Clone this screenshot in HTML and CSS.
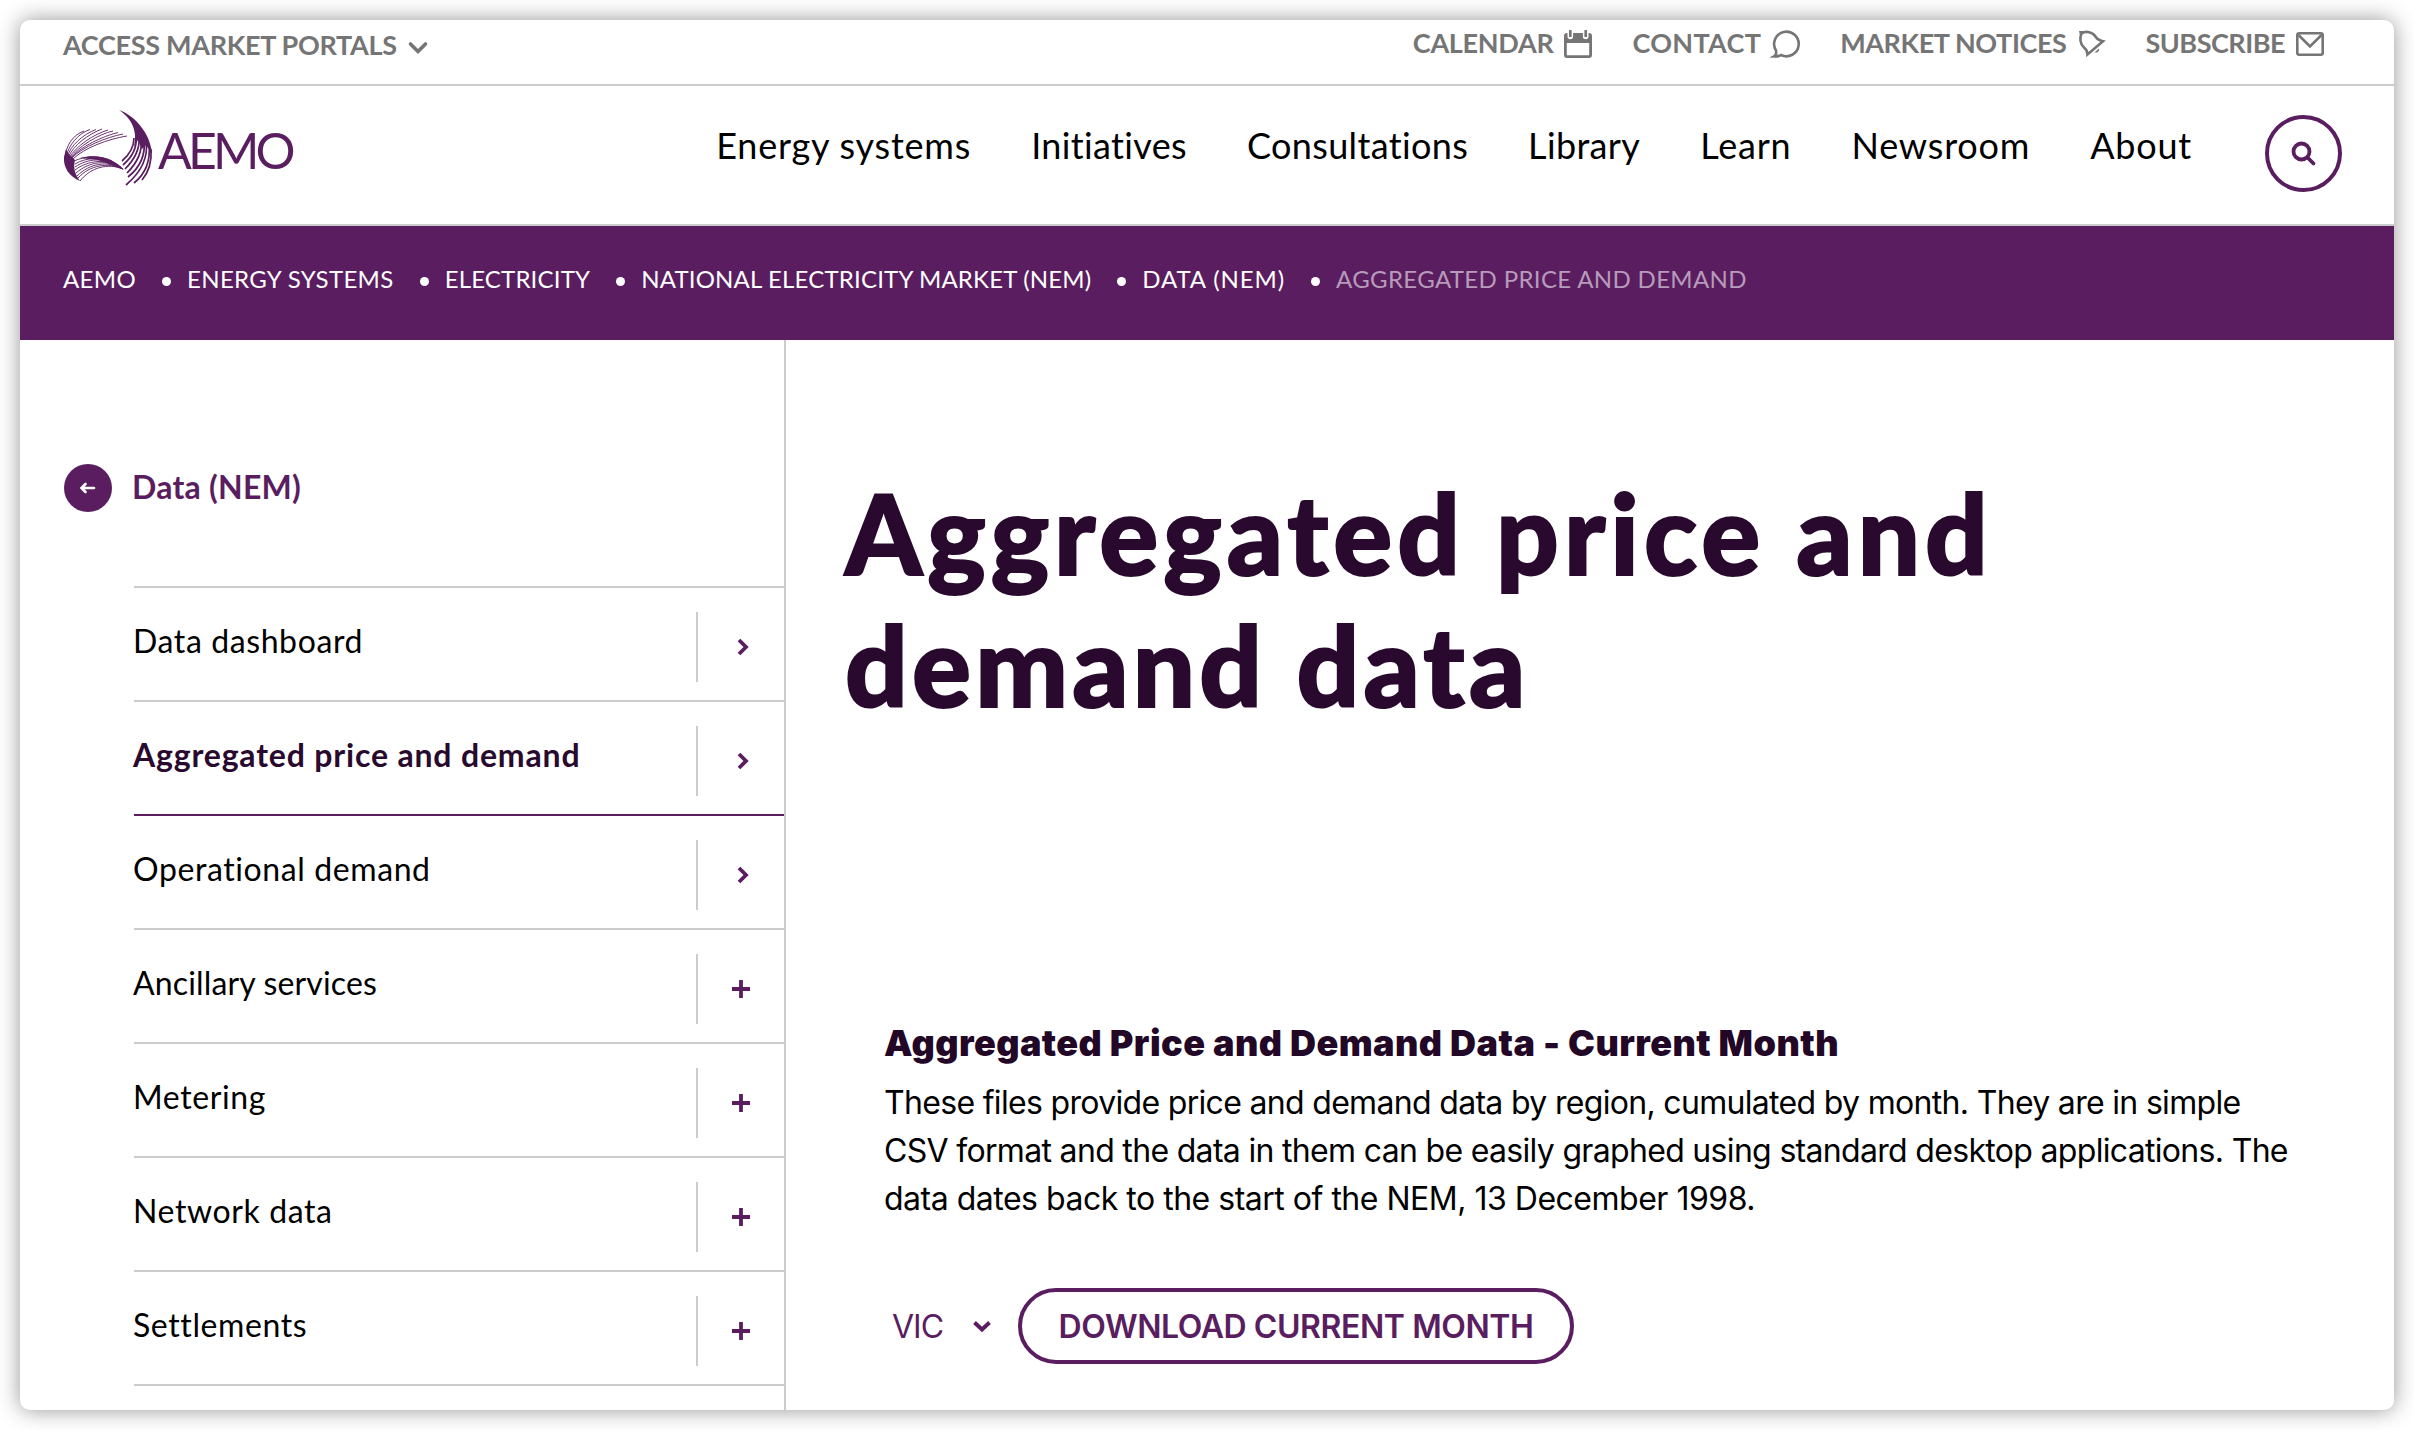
FILE: index.html
```html
<!DOCTYPE html>
<html lang="en">
<head>
<meta charset="utf-8">
<title>AEMO | Aggregated price and demand data</title>
<link rel="stylesheet" href="styles.css">
</head>
<body>
<div class="window">
  <div class="topbar">
    <a class="portals"><span>ACCESS MARKET PORTALS</span>
      <svg class="portals-chevron" width="20" height="14" viewBox="0 0 20 14"><path d="M2.500 3 10 10.500 17.500 3"/></svg></a>
    <div class="utilities">
      <a class="utility calendar"><span>CALENDAR</span>
        <svg width="28" height="28" viewBox="0 0 28 28"><path class="fill" d="M3 3H3.500v3.500a2.800 2.800 0 0 0 5.600 0V3h9.800v3.500a2.800 2.800 0 0 0 5.600 0V3h.5a3 3 0 0 1 3 3v19a3 3 0 0 1-3 3H3a3 3 0 0 1-3-3V6a3 3 0 0 1 3-3ZM2.800 13v12.200h22.400V13Z" fill-rule="evenodd"/><path d="M6.300 0v7M21.700 0v7"/></svg></a>
      <a class="utility contact"><span>CONTACT</span>
        <svg width="28" height="28" viewBox="0 0 28 28"><path d="M2 26.500c2-1 2.500-3 2-6A12.300 12.300 0 1 1 9 25c-2 1.300-4.500 1.700-7 1.500Z"/></svg></a>
      <a class="utility notices"><span>MARKET NOTICES</span>
        <svg width="28" height="28" viewBox="0 0 28 28"><path d="M3.500 3.500C8 .5 14.500 2 17.500 6.500c1.500 2.500 4 4 7.500 4.700L9.500 24.500c0-3.500-1-5-3.500-7C2 14 1.500 8 3.500 3.500Z"/><path class="fill" d="M1 1h5L2 5.500ZM16.500 22.500l4.500-4c.7 2.200-1 4.500-4.500 4Z"/></svg></a>
      <a class="utility subscribe"><span>SUBSCRIBE</span>
        <svg width="28" height="28" viewBox="0 0 28 28"><rect x="1.300" y="3.300" width="25.400" height="21.400" rx="2"/><path d="M2.500 5 14 16.500 25.500 5"/></svg></a>
    </div>
  </div>

  <header class="header">
    <a class="logo">
      <svg class="logo-mark" width="90" height="78" viewBox="63 109 90 78">
        <g class="strands">
          <path d="M65 158C66 145 73 135 84 131M66 158C68 145 79 133 90 129.500M67 158C70 145 84 134 96 129.500M68 158C73 145 89 134 102 129M69 158C76 146 94 134 108 130M70 158C79 146 99 134 113 131M71 158C80 147 103 136 118 132.500M72 158C82 147 107 137 123 134M73 159C84 148 108 139 127 136"/>
          <path d="M74 161C85 156 100 155 112 161M75 164C86 157 103 157 115 163M75 167C88 158 104 158 118 165M75 170C88 160 106 159 119 166M76 173C90 161 107 160 121 167M77 176C90 163 107 161 122 168M78 178C90 165 108 162 123 169M80 181C91 167 108 163 123 169"/>
        </g>
        <path class="blade" d="M64 157C63 168 70 177 80 181 75 174 73 168 75 160 70 156 67 152 66 149ZM80 158C98 153 115 159 124 170 115 166 106 163 98 160ZM119 110C136 116 151 135 152 154L146 145 142 149 138 140 134 147C138 130 131 118 119 110Z"/>
        <path class="feathers" d="M134 138C134 147 129 155 122 161M136 138C137 149 131 158 123 165M139 138C140 151 133 161 125 169M141 139C143 154 135 165 127 173M144 140C146 157 138 169 128 177M146 141C149 160 139 174 126 185M149 144C151 163 144 175 134 183M151 149C152 163 148 173 142 180"/>
      </svg>
      <span class="logo-name">AEMO</span>
    </a>
    <nav class="nav">
      <a>Energy systems</a><a class="snug">Initiatives</a><a class="snug">Consultations</a><a class="snug">Library</a><a>Learn</a><a>Newsroom</a><a>About</a>
    </nav>
    <button class="search" aria-label="Search"><svg width="26" height="26" viewBox="0 0 26 26"><circle cx="10.500" cy="10.500" r="8"/><path d="m16.500 16.500 6 6"/></svg></button>
  </header>

  <div class="crumbs">
    <a>AEMO</a><i></i><a>ENERGY SYSTEMS</a><i></i><a class="snug">ELECTRICITY</a><i></i><a class="snug">NATIONAL ELECTRICITY MARKET (NEM)</a><i></i><a class="loose">DATA (NEM)</a><i></i><span>AGGREGATED PRICE AND DEMAND</span>
  </div>

  <div class="columns">
    <aside class="sidebar">
      <a class="back"><span class="back-dot"><svg width="18" height="16" viewBox="0 0 18 16"><path d="M6.500 4 2.500 8l4 4M3 8h12"/></svg></span><span>Data (NEM)</span></a>
      <ul class="menu">
        <li><a>Data dashboard</a><span class="toggle"><svg width="20" height="20" viewBox="0 0 20 20"><path d="m6 3 7 7-7 7"/></svg></span></li>
        <li class="current"><a>Aggregated price and demand</a><span class="toggle"><svg width="20" height="20" viewBox="0 0 20 20"><path d="m6 3 7 7-7 7"/></svg></span></li>
        <li><a>Operational demand</a><span class="toggle"><svg width="20" height="20" viewBox="0 0 20 20"><path d="m6 3 7 7-7 7"/></svg></span></li>
        <li><a class="snug">Ancillary services</a><span class="toggle"><svg width="20" height="20" viewBox="0 0 20 20"><path d="M8 1v18M-1 10h18"/></svg></span></li>
        <li><a>Metering</a><span class="toggle"><svg width="20" height="20" viewBox="0 0 20 20"><path d="M8 1v18M-1 10h18"/></svg></span></li>
        <li><a>Network data</a><span class="toggle"><svg width="20" height="20" viewBox="0 0 20 20"><path d="M8 1v18M-1 10h18"/></svg></span></li>
        <li><a>Settlements</a><span class="toggle"><svg width="20" height="20" viewBox="0 0 20 20"><path d="M8 1v18M-1 10h18"/></svg></span></li>
      </ul>
    </aside>
    <main class="content">
      <h1>Aggregated price and<br><span>demand data</span></h1>
      <section class="dataset">
        <h2>Aggregated Price and Demand Data - Current Month</h2>
        <p>These files provide price and demand data by region, cumulated by month. They are in simple<br>CSV format and the data in them can be easily graphed using standard desktop applications. The<br><span>data dates back to the start of the NEM, 13 December 1998.</span></p>
        <div class="actions">
          <span class="region"><span>VIC</span><svg width="20" height="14" viewBox="0 0 20 14"><path d="m2.500 3.500 7.500 7 7.500-7"/></svg></span>
          <button class="download">DOWNLOAD CURRENT MONTH</button>
        </div>
      </section>
    </main>
  </div>
</div>
</body>
</html>
```
FILE: styles.css
```css
* { box-sizing: border-box; }

body {
  margin: 0;
  height: 1430px;
  padding: 20px;
  overflow: hidden;
  background: #fff;
  color: #000;
  font-family: Lato, "Liberation Sans", sans-serif;
  font-variant-ligatures: none;
}

svg { display: block; overflow: visible; fill: none; flex: none; }

.window {
  display: flex;
  flex-direction: column;
  height: 1390px;
  overflow: hidden;
  border-radius: 10px;
  background: #fff;
  box-shadow: 0 0 22px rgba(0, 0, 0, .42);
}

.topbar {
  display: flex;
  justify-content: space-between;
  align-items: flex-start;
  height: 66px;
  padding: 0 70px 0 43px;
  border-bottom: 2px solid #ccc;
  color: #757575;
  font-size: 27px;
  font-weight: 700;
  letter-spacing: -.3px;
  white-space: nowrap;
}
.topbar svg { stroke: #757575; stroke-width: 2.600; }
.topbar .fill { fill: #757575; stroke: none; }
.portals { display: flex; line-height: 49px; gap: 11px; }
.portals-chevron { margin-top: 21px; }
.topbar .portals-chevron { stroke-width: 3.600; stroke-linecap: round; }
.utilities { display: flex; gap: 40px; line-height: 45px; }
.utility { display: flex; gap: 11px; }
.utility svg { margin-top: 10px; }
.contact { letter-spacing: .3px; }
.notices { letter-spacing: -.4px; }
.subscribe { letter-spacing: -.5px; }

.header {
  display: flex;
  align-items: flex-start;
  height: 140px;
  padding: 0 52px 0 43px;
  border-bottom: 2px solid #ccc;
}
.logo { display: flex; color: #5a1e60; }
.logo-mark { margin-top: 23px; }
.strands { stroke: #5a1e60; stroke-width: .9; }
.feathers { stroke: #5a1e60; stroke-width: 1.700; }
.blade { fill: #5a1e60; }
.logo-name { margin-left: 5px; font-size: 50px; line-height: 128px; letter-spacing: -3.900px; }
.nav {
  display: flex;
  gap: 60px;
  margin-left: auto;
  font-size: 36px;
  line-height: 118px;
  letter-spacing: .8px;
  white-space: nowrap;
}
.nav .snug { letter-spacing: .35px; }
.search {
  display: flex;
  align-items: center;
  justify-content: center;
  width: 77px;
  height: 77px;
  margin: 29px 0 0 73px;
  padding: 0;
  border: 4px solid #5a1e60;
  border-radius: 50%;
  background: none;
}
.search svg { stroke: #5a1e60; stroke-width: 3.800; stroke-linecap: round; }

.crumbs {
  display: flex;
  height: 114px;
  padding-left: 43px;
  background: #5a1e60;
  color: #fff;
  font-size: 24px;
  line-height: 106px;
  letter-spacing: .35px;
  white-space: nowrap;
}
.crumbs .snug { letter-spacing: .18px; }
.crumbs .loose { letter-spacing: .9px; }
.crumbs i {
  width: 9px;
  height: 9px;
  margin: 51px 16px 0 26px;
  border-radius: 50%;
  background: #fff;
}
.crumbs span { color: #b79bba; }

.columns { display: flex; flex: 1; min-height: 0; }

.sidebar {
  width: 766px;
  flex: none;
  padding: 124px 0 0 44px;
  border-right: 2px solid #ccc;
}
.back {
  display: flex;
  align-items: center;
  height: 47px;
  gap: 20px;
  color: #5a1e60;
  font-size: 32px;
  font-weight: 700;
  line-height: 44px;
  letter-spacing: .23px;
}
.back > span:last-child { margin-top: -2px; }
.back-dot {
  display: flex;
  align-items: center;
  justify-content: center;
  width: 48px;
  height: 48px;
  border-radius: 50%;
  background: #5a1e60;
}
.back-dot svg { stroke: #fff; stroke-width: 2.600; stroke-linecap: round; }
.menu {
  margin: 75px 0 0 70px;
  padding: 0;
  list-style: none;
  border-top: 2px solid #ccc;
}
.menu li {
  display: flex;
  justify-content: space-between;
  height: 114px;
  border-bottom: 2px solid #ccc;
  font-size: 32px;
  line-height: 105px;
  letter-spacing: .6px;
}
.menu a { margin-left: -1px; }
.menu .snug { letter-spacing: .15px; }
.menu .current { border-color: #5a1e60; color: #290a2e; font-weight: 700; letter-spacing: .82px; }
.toggle {
  display: flex;
  align-items: center;
  width: 88px;
  height: 70px;
  margin-top: 24px;
  padding-left: 35px;
  border-left: 2px solid #ccc;
}
.toggle svg { stroke: #5a1e60; stroke-width: 3.800; }

.content { flex: 1; padding-top: 126px; white-space: nowrap; }
h1 {
  margin: 0 0 0 59px;
  color: #290a2e;
  font-size: 110px;
  font-weight: 900;
  line-height: 132px;
  letter-spacing: 5px;
  -webkit-text-stroke: 2px #290a2e;
}
h1 span { letter-spacing: 4.200px; }
.dataset { margin: 289px 0 0 98px; font-family: Inter, "Liberation Sans", sans-serif; }
h2 { margin: 0; color: #220727; font-size: 36px; font-weight: 900; line-height: 48px; letter-spacing: .43px; }
p { margin: 12px 0 0; font-size: 32px; line-height: 48px; letter-spacing: -.68px; }
p span { letter-spacing: -.49px; }
.actions { display: flex; align-items: center; margin-top: 65px; color: #5a1e60; font-size: 32px; }
.region { display: flex; align-items: center; gap: 29px; margin-left: 8px; width: 126px; letter-spacing: -1px; }
.region svg { stroke: #5a1e60; stroke-width: 4; }
.download {
  height: 76px;
  width: 556px;
  padding: 2px 0 0;
  border: 4px solid #5a1e60;
  border-radius: 38px;
  background: none;
  color: #5a1e60;
  font: 600 32px/66px Inter, "Liberation Sans", sans-serif;
  letter-spacing: -.43px;
}
```
